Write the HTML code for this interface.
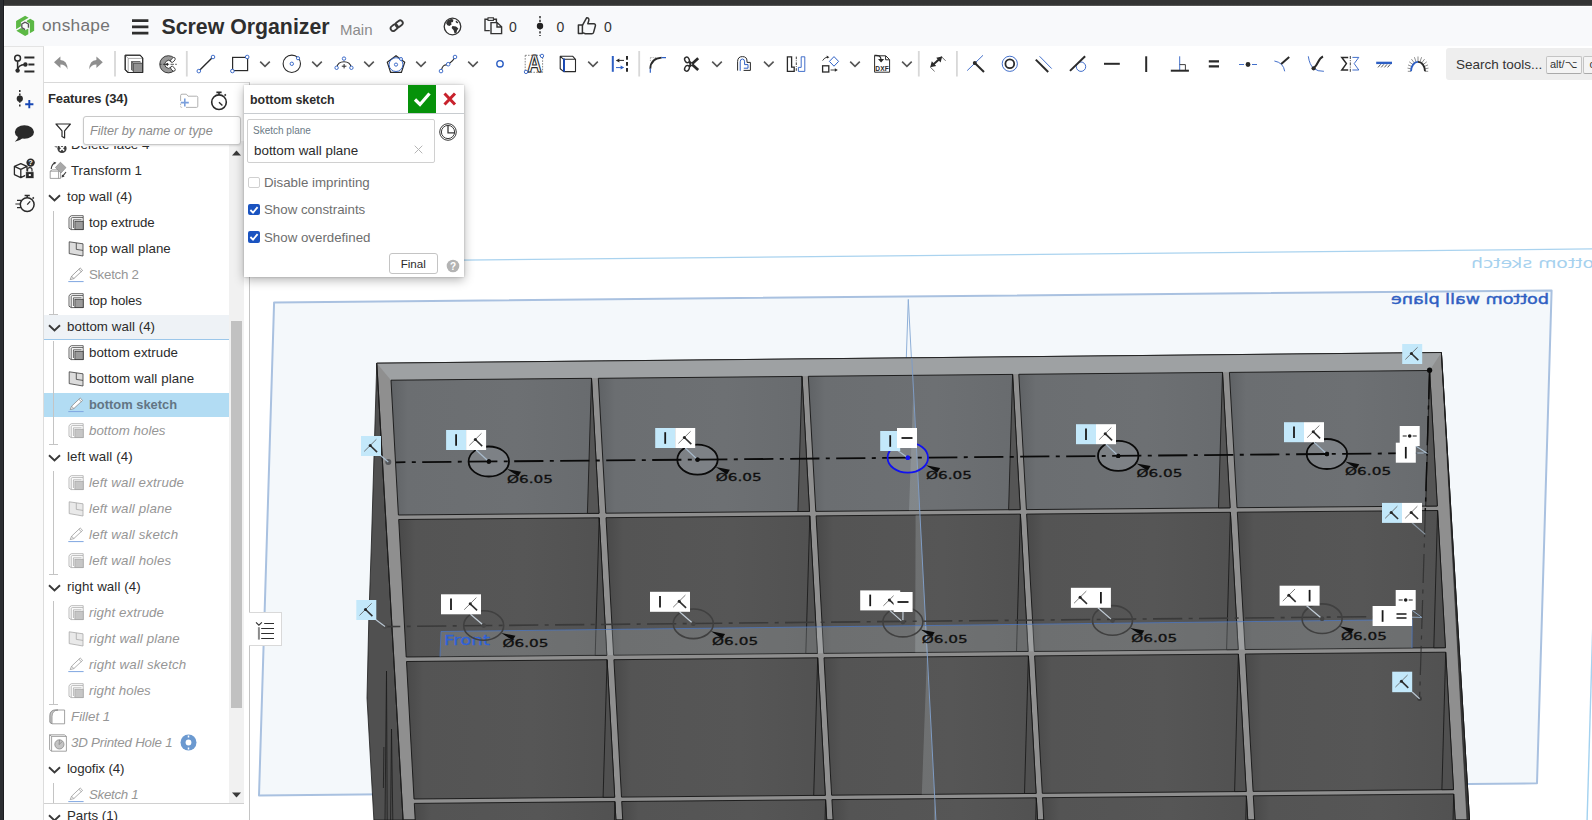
<!DOCTYPE html>
<html lang="en"><head><meta charset="utf-8"><title>Screw Organizer | Onshape</title>
<style>
*{box-sizing:border-box;margin:0;padding:0}
html,body{width:1592px;height:820px;overflow:hidden;background:#fff;font-family:"Liberation Sans",sans-serif;color:#2b2b2b}
#scene{position:absolute;left:0;top:0}
.abs{position:absolute}
#lstrip{position:absolute;left:0;top:0;width:4px;height:820px;background:linear-gradient(90deg,#2b2d31 0,#2b2d31 2.6px,#1b1c20 3.4px,#1b1c20 4px)}
#tbar{position:absolute;left:4px;top:0;width:1588px;height:6px;background:linear-gradient(180deg,#343434 0,#343434 4.4px,#4a4a4a 5.4px,#8a8a8a 6px)}
#hdr{position:absolute;left:4px;top:6px;width:1588px;height:40px;background:#f8f9fb;border-left:1px solid #fff;border-top:1px solid #fff}
#hdr .t{position:absolute;white-space:pre;line-height:1}
#tools{position:absolute;left:44px;top:46px;width:1548px;height:37px;background:#fff}
#side{position:absolute;left:4px;top:46px;width:40px;height:774px;background:#fafafa;border-right:1px solid #dcdcdc;border-top:1px solid #e4e4e4}
.sep{position:absolute;top:6px;width:2px;height:25px;background:#d4d4d4}
.ic{position:absolute;overflow:visible}
#fpanel{position:absolute;left:44px;top:82px;width:206px;height:738px;background:#fff;border-top:1px solid #d9d9d9;border-right:1px solid #c4c4c4}
#fpanel .hd{position:absolute;left:4px;top:8px;font-weight:bold;font-size:13px;letter-spacing:-0.1px;color:#2b2b2b;white-space:pre}
#filter{position:absolute;left:39px;top:32.5px;width:158px;height:29.5px;border:1px solid #c9c9c9;border-radius:3px;background:#fff;box-shadow:0 1px 2px rgba(0,0,0,.12);z-index:3}
#filter span{position:absolute;left:6px;top:7px;font-style:italic;font-size:12.7px;color:#8c8c8c;white-space:pre}
#list{position:absolute;left:0;top:62.5px;width:200px;height:657.5px;overflow:hidden}
.row{position:absolute;left:0;width:185.5px;height:26px;font-size:13.3px;line-height:25px;white-space:pre;color:#2b2b2b}
.row.sup{font-style:italic;color:#969696;font-size:13.3px}
.row.sel{background:#b2dcf3;font-weight:bold;color:#627584;font-size:12.9px}
.row.sel::before{content:'';position:absolute;left:0;top:0;width:100%;height:1.2px;background:#fff}
.row.sel::after{content:'';position:absolute;left:0;bottom:0;width:100%;height:1.2px;background:#fff}
.row.grp{}
.row.grpsel{background:linear-gradient(180deg,#fff 0,#fff 1.5px,#eef2f6 1.5px);border-bottom:1px solid #9cc7ea;height:25.5px}
.row .tx{position:absolute;top:0}
.row svg{position:absolute}
.vline{position:absolute;width:1px;background:#c4c4c4}
.vtick{position:absolute;height:1px;width:9px;background:#c4c4c4}
#sbar{position:absolute;left:185px;top:58px;width:15px;height:663px;background:#f1f1f1}
#sthumb{position:absolute;left:2px;top:180px;width:11px;height:387px;background:#c1c1c1}
#dlg{position:absolute;left:244px;top:85px;width:220px;height:192px;background:#fff;box-shadow:0 3px 10px rgba(0,0,0,.3),0 0 2px rgba(0,0,0,.22);z-index:5}
#dlg .hd{position:absolute;left:0;top:0;width:220px;height:28.5px;border-bottom:1px solid #c8ccd0}
#dlg .hd span{position:absolute;left:6px;top:7.7px;font-weight:bold;font-size:12.4px;color:#2b2b2b;white-space:pre}
#ok{position:absolute;left:164px;top:0;width:28px;height:28px;background:#06920a}
#fld{position:absolute;left:2.5px;top:34px;width:188.5px;height:43.5px;border:1px solid #d0d0d0;border-radius:2px}
#fld .l{position:absolute;left:5.5px;top:5.2px;font-size:10px;color:#6b7a86;white-space:pre}
#fld .v{position:absolute;left:6.5px;top:22.5px;font-size:13.4px;color:#2b2b2b;white-space:pre}
.cb{position:absolute;left:4px;width:11.5px;height:11.5px;border-radius:2px}
.cb svg{position:absolute;left:0;top:0}
.cb.off{border:1px solid #d0d0d0;background:#fff}
.cb.on{background:#1a53c0}
.cbl{position:absolute;left:20px;font-size:13.3px;color:#6e6e6e;white-space:pre}
#final{position:absolute;left:145px;top:168px;width:48.5px;height:21px;border:1px solid #c4c4c4;border-radius:3px;font-size:11.6px;text-align:center;line-height:19px;color:#2b2b2b;background:#fff}
#search{position:absolute;left:1402px;top:2px;width:160px;height:32px;background:#eeeeee;border-radius:3px 0 0 3px;overflow:hidden}
#search span.s{position:absolute;left:10px;top:8.5px;font-size:13.5px;color:#333;white-space:pre}
.kbd{position:absolute;top:8.4px;height:18px;border:1px solid #c4c4c4;border-bottom:1.5px solid #aaa;border-radius:2px;background:#f4f4f4;font-family:"Liberation Sans","DejaVu Sans",sans-serif;font-size:11px;line-height:15px;color:#333;padding-left:3px;white-space:pre}
#flyout{position:absolute;left:249px;top:612px;width:33px;height:34px;background:#fff;border:1px solid #d9d9d9;border-left:none;z-index:2}
#parts{position:absolute;left:0;top:720px;width:200px;height:20px;border-top:1px solid #d0d0d0;background:#fff}
.row.gray{color:#969696}

</style></head>
<body>
<svg id="scene" width="1592" height="820" viewBox="0 0 1592 820">
<defs>
<linearGradient id="gTop" x1="0" y1="0" x2="0" y2="1"><stop offset="0" stop-color="#a1a3a5"/><stop offset="1" stop-color="#909294"/></linearGradient>
<linearGradient id="gF1" x1="0" y1="0" x2="1" y2="0"><stop offset="0" stop-color="#5f6265"/><stop offset="0.08" stop-color="#6b6e71"/><stop offset="0.6" stop-color="#6d7073"/><stop offset="1" stop-color="#686b6e"/></linearGradient>
<linearGradient id="gF2" x1="0" y1="0" x2="1" y2="0"><stop offset="0" stop-color="#494949"/><stop offset="0.08" stop-color="#545454"/><stop offset="0.6" stop-color="#565656"/><stop offset="1" stop-color="#515151"/></linearGradient>
</defs>
<rect width="1592" height="820" fill="#fff"/>
<line x1="250" y1="262.3" x2="1592" y2="248.9" stroke="#aad3ef" stroke-width="1.3"/>
<g transform="translate(1606,268) scale(-1,1)"><text x="0" y="0" font-family="'DejaVu Sans','Liberation Sans',sans-serif" font-size="14" fill="#a6d1ee" textLength="135" lengthAdjust="spacingAndGlyphs">bottom sketch</text></g>
<line x1="1596" y1="515" x2="1587.1" y2="820" stroke="#a3d2f0" stroke-width="1.4"/>
<polygon points="274.1,302.4 1551.6,290.5 1537.0,783.3 259.0,795.5" fill="#f4f8fb" stroke="#a9c1e0" stroke-width="2" stroke-linejoin="round"/>
<g transform="translate(1549,304.3) scale(-1,1)"><text x="0" y="0" font-family="'DejaVu Sans','Liberation Sans',sans-serif" font-size="14" fill="#2f5fc2" textLength="158" lengthAdjust="spacingAndGlyphs" stroke="#2f5fc2" stroke-width="0.45">bottom wall plane</text></g>
<path d="M908.3 299.4 L906.3 358 M908.3 299.4 L911.5 360" stroke="#8fb0d8" stroke-width="1" fill="none"/>
<polygon points="376.8,363.2 371.5,540.0 368.8,620.0 367.0,698.0 373.9,820.0 403.1,820.0" fill="#505050" stroke="#1c1c1c" stroke-width="0.8"/>
<path d="M386.5 671 L385 820 M386.5 671 L387.2 820 M391.5 729 L390.6 820 M391.5 729 L392.8 820 M383.9 747 L383.4 788" stroke="#1c1c1c" stroke-width="0.8" fill="none"/>
<polygon points="376.8,363.2 1441.4,352.5 1469.5,820.0 403.1,820.0" fill="#8f8f8f" stroke="#1c1c1c" stroke-width="0.9" stroke-linejoin="round"/>
<polygon points="1441.4,352.5 1469.5,820.0 1467.0,820.0" fill="#3a3a3a" stroke="#1c1c1c" stroke-width="0.6"/>
<polygon points="376.8,363.2 1441.4,352.5 1429.6,370.5 391.0,380.2" fill="#9ea1a3"/>
<polygon points="391.0,380.2 1429.6,370.5 1437.3,510.5 398.4,519.5" fill="#8f8f8f"/>
<polygon points="376.8,363.2 1441.4,352.5 1469.5,820.0 403.1,820.0" fill="none" stroke="#1c1c1c" stroke-width="0.9" stroke-linejoin="round"/>
<polygon points="391.0,380.2 591.5,378.3 599.0,513.3 398.4,515.0" fill="url(#gF1)" stroke="#141414" stroke-width="0.9" stroke-linejoin="round"/>
<polygon points="591.5,378.3 599.0,513.3 587.4,513.4" fill="#555555" stroke="#141414" stroke-width="0.8" stroke-linejoin="round"/>
<polygon points="598.3,378.3 802.0,376.4 809.5,511.4 605.8,513.2" fill="url(#gF1)" stroke="#141414" stroke-width="0.9" stroke-linejoin="round"/>
<polygon points="802.0,376.4 809.5,511.4 797.9,511.5" fill="#555555" stroke="#141414" stroke-width="0.8" stroke-linejoin="round"/>
<polygon points="808.3,376.3 1012.6,374.4 1020.2,509.6 815.8,511.4" fill="url(#gF1)" stroke="#141414" stroke-width="0.9" stroke-linejoin="round"/>
<polygon points="1012.6,374.4 1020.2,509.6 1008.6,509.7" fill="#555555" stroke="#141414" stroke-width="0.8" stroke-linejoin="round"/>
<polygon points="1018.8,374.3 1222.5,372.4 1230.1,507.8 1026.4,509.6" fill="url(#gF1)" stroke="#141414" stroke-width="0.9" stroke-linejoin="round"/>
<polygon points="1222.5,372.4 1230.1,507.8 1218.5,507.9" fill="#555555" stroke="#141414" stroke-width="0.8" stroke-linejoin="round"/>
<polygon points="1229.4,372.4 1429.6,370.5 1437.3,506.0 1237.0,507.7" fill="url(#gF1)" stroke="#141414" stroke-width="0.9" stroke-linejoin="round"/>
<polygon points="1429.6,370.5 1437.3,506.0 1425.7,506.1" fill="#555555" stroke="#141414" stroke-width="0.8" stroke-linejoin="round"/>
<polygon points="398.7,519.5 599.2,517.8 606.8,655.2 406.2,657.0" fill="url(#gF2)" stroke="#141414" stroke-width="0.9" stroke-linejoin="round"/>
<polygon points="599.2,517.8 606.8,655.2 595.2,655.3" fill="#505050" stroke="#141414" stroke-width="0.8" stroke-linejoin="round"/>
<polygon points="606.0,517.7 809.8,515.9 817.4,653.3 613.6,655.1" fill="url(#gF2)" stroke="#141414" stroke-width="0.9" stroke-linejoin="round"/>
<polygon points="809.8,515.9 817.4,653.3 805.8,653.4" fill="#505050" stroke="#141414" stroke-width="0.8" stroke-linejoin="round"/>
<polygon points="816.1,515.9 1020.4,514.1 1028.1,651.4 823.7,653.3" fill="url(#gF2)" stroke="#141414" stroke-width="0.9" stroke-linejoin="round"/>
<polygon points="1020.4,514.1 1028.1,651.4 1016.5,651.5" fill="#505050" stroke="#141414" stroke-width="0.8" stroke-linejoin="round"/>
<polygon points="1026.6,514.1 1230.4,512.3 1238.2,649.6 1034.3,651.4" fill="url(#gF2)" stroke="#141414" stroke-width="0.9" stroke-linejoin="round"/>
<polygon points="1230.4,512.3 1238.2,649.6 1226.6,649.7" fill="#505050" stroke="#141414" stroke-width="0.8" stroke-linejoin="round"/>
<polygon points="1237.3,512.2 1437.6,510.5 1445.4,647.7 1245.1,649.5" fill="url(#gF2)" stroke="#141414" stroke-width="0.9" stroke-linejoin="round"/>
<polygon points="1437.6,510.5 1445.4,647.7 1433.8,647.8" fill="#505050" stroke="#141414" stroke-width="0.8" stroke-linejoin="round"/>
<polygon points="406.5,661.5 607.1,659.7 614.7,797.2 414.0,799.0" fill="url(#gF2)" stroke="#141414" stroke-width="0.9" stroke-linejoin="round"/>
<polygon points="607.1,659.7 614.7,797.2 603.1,797.3" fill="#505050" stroke="#141414" stroke-width="0.8" stroke-linejoin="round"/>
<polygon points="613.9,659.7 817.7,657.8 825.3,795.3 621.5,797.1" fill="url(#gF2)" stroke="#141414" stroke-width="0.9" stroke-linejoin="round"/>
<polygon points="817.7,657.8 825.3,795.3 813.7,795.4" fill="#505050" stroke="#141414" stroke-width="0.8" stroke-linejoin="round"/>
<polygon points="824.0,657.8 1028.4,655.9 1036.1,793.4 831.6,795.2" fill="url(#gF2)" stroke="#141414" stroke-width="0.9" stroke-linejoin="round"/>
<polygon points="1028.4,655.9 1036.1,793.4 1024.5,793.5" fill="#505050" stroke="#141414" stroke-width="0.8" stroke-linejoin="round"/>
<polygon points="1034.6,655.9 1238.4,654.1 1246.2,791.5 1042.3,793.3" fill="url(#gF2)" stroke="#141414" stroke-width="0.9" stroke-linejoin="round"/>
<polygon points="1238.4,654.1 1246.2,791.5 1234.6,791.6" fill="#505050" stroke="#141414" stroke-width="0.8" stroke-linejoin="round"/>
<polygon points="1245.3,654.0 1445.7,652.2 1453.5,789.6 1253.1,791.4" fill="url(#gF2)" stroke="#141414" stroke-width="0.9" stroke-linejoin="round"/>
<polygon points="1445.7,652.2 1453.5,789.6 1441.9,789.7" fill="#505050" stroke="#141414" stroke-width="0.8" stroke-linejoin="round"/>
<polygon points="414.3,803.4 614.9,801.6 622.8,943.2 422.1,945.0" fill="url(#gF2)" stroke="#141414" stroke-width="0.9" stroke-linejoin="round"/>
<polygon points="614.9,801.6 622.8,943.2 611.2,943.3" fill="#505050" stroke="#141414" stroke-width="0.8" stroke-linejoin="round"/>
<polygon points="621.7,801.5 825.6,799.7 833.5,941.2 629.6,943.1" fill="url(#gF2)" stroke="#141414" stroke-width="0.9" stroke-linejoin="round"/>
<polygon points="825.6,799.7 833.5,941.2 821.9,941.3" fill="#505050" stroke="#141414" stroke-width="0.8" stroke-linejoin="round"/>
<polygon points="831.9,799.6 1036.3,797.8 1044.3,939.3 839.8,941.2" fill="url(#gF2)" stroke="#141414" stroke-width="0.9" stroke-linejoin="round"/>
<polygon points="1036.3,797.8 1044.3,939.3 1032.7,939.4" fill="#505050" stroke="#141414" stroke-width="0.8" stroke-linejoin="round"/>
<polygon points="1042.5,797.7 1246.4,795.9 1254.4,937.4 1050.5,939.3" fill="url(#gF2)" stroke="#141414" stroke-width="0.9" stroke-linejoin="round"/>
<polygon points="1246.4,795.9 1254.4,937.4 1242.8,937.5" fill="#505050" stroke="#141414" stroke-width="0.8" stroke-linejoin="round"/>
<polygon points="1253.3,795.8 1453.7,794.0 1461.8,935.5 1261.4,937.4" fill="url(#gF2)" stroke="#141414" stroke-width="0.9" stroke-linejoin="round"/>
<polygon points="1453.7,794.0 1461.8,935.5 1450.2,935.6" fill="#505050" stroke="#141414" stroke-width="0.8" stroke-linejoin="round"/>
<polygon points="913.2,394.3 919.8,510.5 909.0,510.5" fill="#f0f8ff" opacity="0.17"/>
<polygon points="915.6,515.0 920.0,515.0 927.2,652.4 915.2,652.4" fill="#f0f8ff" opacity="0.17"/>
<polygon points="926.9,656.9 934.5,794.4 921.8,794.4" fill="#f0f8ff" opacity="0.17"/>
<polygon points="934.3,798.8 936.0,822.0 933.8,822.0" fill="#f0f8ff" opacity="0.17"/>
<line x1="911.8" y1="358" x2="935.9" y2="820" stroke="#7f9cc4" stroke-width="1"/>
<clipPath id="cpRow2"><polygon points="398.7,519.5 1437.6,510.5 1445.4,647.7 406.2,657.0"/></clipPath>
<polygon points="441.0,631.5 1412.2,619.6 1412.0,648.0 440.0,656.7" fill="#f0f8ff" opacity="0.17"/>
<polyline points="440.0,656.7 441.0,631.5 1412.2,619.6 1412.0,648.0" fill="none" stroke="#4a78c8" stroke-width="0.9" opacity="0.8"/>
<text x="444" y="644.8" font-family="'DejaVu Sans','Liberation Sans',sans-serif" font-size="13.5" fill="#2f62d8" stroke="#2f62d8" stroke-width="0.3" textLength="46" lengthAdjust="spacingAndGlyphs">Front</text>
<ellipse cx="488.8" cy="461.5" rx="20.2" ry="15" fill="#aab0b8" fill-opacity="0.28"/>
<ellipse cx="697.5" cy="459.6" rx="20.2" ry="15" fill="#aab0b8" fill-opacity="0.28"/>
<ellipse cx="907.8" cy="457.7" rx="20.2" ry="15" fill="#aab0b8" fill-opacity="0.28"/>
<ellipse cx="1118.2" cy="455.9" rx="20.2" ry="15" fill="#aab0b8" fill-opacity="0.28"/>
<ellipse cx="1326.9" cy="454.0" rx="20.2" ry="15" fill="#aab0b8" fill-opacity="0.28"/>
<line x1="396" y1="462.3" x2="1426" y2="453.1" stroke="#0a0a0a" stroke-width="1.8" stroke-dasharray="29.2 6.4 4 6.4" stroke-dashoffset="19.8"/>
<ellipse cx="488.8" cy="461.5" rx="20.2" ry="15" fill="none" stroke="#0a0a0a" stroke-width="1.8"/>
<circle cx="488.8" cy="461.5" r="2.2" fill="#0a0a0a"/>
<polygon points="507.0,469.0 521.2,471.7 518.2,476.3" fill="#0a0a0a"/>
<text x="507.0" y="482.7" font-family="'DejaVu Sans','Liberation Sans',sans-serif" font-size="11.3" fill="#101010" stroke="#101010" stroke-width="0.32" textLength="46" lengthAdjust="spacingAndGlyphs">Ø6.05</text>
<ellipse cx="697.5" cy="459.6" rx="20.2" ry="15" fill="none" stroke="#0a0a0a" stroke-width="1.8"/>
<circle cx="697.5" cy="459.6" r="2.2" fill="#0a0a0a"/>
<polygon points="715.7,467.1 729.9,469.8 726.9,474.4" fill="#0a0a0a"/>
<text x="715.7" y="480.8" font-family="'DejaVu Sans','Liberation Sans',sans-serif" font-size="11.3" fill="#101010" stroke="#101010" stroke-width="0.32" textLength="46" lengthAdjust="spacingAndGlyphs">Ø6.05</text>
<ellipse cx="907.8" cy="457.7" rx="20.2" ry="15" fill="none" stroke="#1212f0" stroke-width="1.8"/>
<circle cx="907.8" cy="457.7" r="2.2" fill="#1212f0"/>
<polygon points="926.0,465.2 940.2,467.9 937.2,472.5" fill="#0a0a0a"/>
<text x="926.0" y="478.9" font-family="'DejaVu Sans','Liberation Sans',sans-serif" font-size="11.3" fill="#101010" stroke="#101010" stroke-width="0.32" textLength="46" lengthAdjust="spacingAndGlyphs">Ø6.05</text>
<ellipse cx="1118.2" cy="455.9" rx="20.2" ry="15" fill="none" stroke="#0a0a0a" stroke-width="1.8"/>
<circle cx="1118.2" cy="455.9" r="2.2" fill="#0a0a0a"/>
<polygon points="1136.4,463.4 1150.6,466.1 1147.6,470.7" fill="#0a0a0a"/>
<text x="1136.4" y="477.1" font-family="'DejaVu Sans','Liberation Sans',sans-serif" font-size="11.3" fill="#101010" stroke="#101010" stroke-width="0.32" textLength="46" lengthAdjust="spacingAndGlyphs">Ø6.05</text>
<ellipse cx="1326.9" cy="454.0" rx="20.2" ry="15" fill="none" stroke="#0a0a0a" stroke-width="1.8"/>
<circle cx="1326.9" cy="454.0" r="2.2" fill="#0a0a0a"/>
<polygon points="1345.1,461.5 1359.3,464.2 1356.3,468.8" fill="#0a0a0a"/>
<text x="1345.1" y="475.2" font-family="'DejaVu Sans','Liberation Sans',sans-serif" font-size="11.3" fill="#101010" stroke="#101010" stroke-width="0.32" textLength="46" lengthAdjust="spacingAndGlyphs">Ø6.05</text>
<line x1="1429.6" y1="370" x2="1419.6" y2="698.7" stroke="#2e2e2e" stroke-width="1.2" stroke-dasharray="29.2 6.4 4 6.4" opacity="0.8"/>
<line x1="1429.6" y1="370" x2="1425.3" y2="511" stroke="#0c0c0c" stroke-width="1.4" stroke-dasharray="29.2 6.4 4 6.4"/>
<circle cx="1429.6" cy="370.2" r="2.6" fill="#0a0a0a"/>
<circle cx="388.3" cy="462" r="3" fill="#55575a"/>
<line x1="385" y1="626.6" x2="1423" y2="616.2" stroke="#3a3a3a" stroke-width="1.6" stroke-dasharray="29.2 6.4 4 6.4" stroke-dashoffset="13.9"/>
<ellipse cx="483.7" cy="625.5" rx="20" ry="14.8" fill="none" stroke="#404040" stroke-width="1.6"/>
<circle cx="483.7" cy="625.5" r="2.1" fill="#444"/>
<polygon points="501.3,633.0 515.5,635.7 512.5,640.3" fill="#0a0a0a"/>
<text x="502.5" y="646.6" font-family="'DejaVu Sans','Liberation Sans',sans-serif" font-size="11.3" fill="#101010" stroke="#101010" stroke-width="0.32" textLength="46" lengthAdjust="spacingAndGlyphs">Ø6.05</text>
<ellipse cx="693.3" cy="623.8" rx="20" ry="14.8" fill="none" stroke="#404040" stroke-width="1.6"/>
<circle cx="693.3" cy="623.8" r="2.1" fill="#444"/>
<polygon points="710.9,631.3 725.1,634.0 722.1,638.6" fill="#0a0a0a"/>
<text x="712.1" y="644.9" font-family="'DejaVu Sans','Liberation Sans',sans-serif" font-size="11.3" fill="#101010" stroke="#101010" stroke-width="0.32" textLength="46" lengthAdjust="spacingAndGlyphs">Ø6.05</text>
<ellipse cx="902.9" cy="622.1" rx="20" ry="14.8" fill="none" stroke="#404040" stroke-width="1.6"/>
<circle cx="902.9" cy="622.1" r="2.1" fill="#444"/>
<polygon points="920.5,629.6 934.7,632.3 931.7,636.9" fill="#0a0a0a"/>
<text x="921.7" y="643.2" font-family="'DejaVu Sans','Liberation Sans',sans-serif" font-size="11.3" fill="#101010" stroke="#101010" stroke-width="0.32" textLength="46" lengthAdjust="spacingAndGlyphs">Ø6.05</text>
<ellipse cx="1112.5" cy="620.4" rx="20" ry="14.8" fill="none" stroke="#404040" stroke-width="1.6"/>
<circle cx="1112.5" cy="620.4" r="2.1" fill="#444"/>
<polygon points="1130.1,627.9 1144.3,630.6 1141.3,635.2" fill="#0a0a0a"/>
<text x="1131.3" y="641.5" font-family="'DejaVu Sans','Liberation Sans',sans-serif" font-size="11.3" fill="#101010" stroke="#101010" stroke-width="0.32" textLength="46" lengthAdjust="spacingAndGlyphs">Ø6.05</text>
<ellipse cx="1322.1" cy="618.7" rx="20" ry="14.8" fill="none" stroke="#404040" stroke-width="1.6"/>
<circle cx="1322.1" cy="618.7" r="2.1" fill="#444"/>
<polygon points="1339.7,626.2 1353.9,628.9 1350.9,633.5" fill="#0a0a0a"/>
<text x="1340.9" y="639.8" font-family="'DejaVu Sans','Liberation Sans',sans-serif" font-size="11.3" fill="#101010" stroke="#101010" stroke-width="0.32" textLength="46" lengthAdjust="spacingAndGlyphs">Ø6.05</text>
<circle cx="385" cy="626.5" r="2.4" fill="#484848"/>
<circle cx="1419.6" cy="698.7" r="2.4" fill="#3a3a3a"/>
<line x1="476.1" y1="450.0" x2="488.8" y2="461.5" stroke="#a9bccd" stroke-width="1.2"/>
<rect x="446.1" y="430.0" width="20" height="20" fill="#c3e8fa"/>
<path d="M456.1 434.2 V445.8" stroke="#1a1a1a" stroke-width="1.8" fill="none"/>
<rect x="466.1" y="430.0" width="20" height="20" fill="#ffffff"/>
<g transform="translate(466.1,430.0)"><path d="M3.2 15.4 L15.4 3.3" stroke="#5a5a5a" stroke-width="0.8" fill="none"/><path d="M9.2 9.5 L16.1 16.1" stroke="#303030" stroke-width="1.6" fill="none"/><circle cx="9.2" cy="9.5" r="1.5" fill="#262626"/></g>
<line x1="685.2" y1="448.0" x2="697.5" y2="459.6" stroke="#a9bccd" stroke-width="1.2"/>
<rect x="655.2" y="428.0" width="20" height="20" fill="#c3e8fa"/>
<path d="M665.2 432.2 V443.8" stroke="#1a1a1a" stroke-width="1.8" fill="none"/>
<rect x="675.2" y="428.0" width="20" height="20" fill="#ffffff"/>
<g transform="translate(675.2,428.0)"><path d="M3.2 15.4 L15.4 3.3" stroke="#5a5a5a" stroke-width="0.8" fill="none"/><path d="M9.2 9.5 L16.1 16.1" stroke="#303030" stroke-width="1.6" fill="none"/><circle cx="9.2" cy="9.5" r="1.5" fill="#262626"/></g>
<line x1="1106.0" y1="444.2" x2="1118.2" y2="455.9" stroke="#a9bccd" stroke-width="1.2"/>
<rect x="1076.0" y="424.2" width="20" height="20" fill="#c3e8fa"/>
<path d="M1086.0 428.4 V440.0" stroke="#1a1a1a" stroke-width="1.8" fill="none"/>
<rect x="1096.0" y="424.2" width="20" height="20" fill="#ffffff"/>
<g transform="translate(1096.0,424.2)"><path d="M3.2 15.4 L15.4 3.3" stroke="#5a5a5a" stroke-width="0.8" fill="none"/><path d="M9.2 9.5 L16.1 16.1" stroke="#303030" stroke-width="1.6" fill="none"/><circle cx="9.2" cy="9.5" r="1.5" fill="#262626"/></g>
<line x1="1314.0" y1="442.2" x2="1326.9" y2="454.0" stroke="#a9bccd" stroke-width="1.2"/>
<rect x="1284.0" y="422.2" width="20" height="20" fill="#c3e8fa"/>
<path d="M1294.0 426.4 V438.0" stroke="#1a1a1a" stroke-width="1.8" fill="none"/>
<rect x="1304.0" y="422.2" width="20" height="20" fill="#ffffff"/>
<g transform="translate(1304.0,422.2)"><path d="M3.2 15.4 L15.4 3.3" stroke="#5a5a5a" stroke-width="0.8" fill="none"/><path d="M9.2 9.5 L16.1 16.1" stroke="#303030" stroke-width="1.6" fill="none"/><circle cx="9.2" cy="9.5" r="1.5" fill="#262626"/></g>
<line x1="897.0" y1="450.0" x2="907.8" y2="457.7" stroke="#a9bccd" stroke-width="1.2"/>
<rect x="880.2" y="431.0" width="20" height="20" fill="#c3e8fa"/>
<path d="M890.2 435.2 V446.8" stroke="#1a1a1a" stroke-width="1.8" fill="none"/>
<rect x="897.0" y="428.0" width="20" height="20" fill="#ffffff"/>
<path d="M901.5 438.0 H912.5" stroke="#1a1a1a" stroke-width="1.8" fill="none"/>
<line x1="380.0" y1="455.0" x2="388.3" y2="462.0" stroke="#a9bccd" stroke-width="1.2"/>
<rect x="361.0" y="436.0" width="20" height="20" fill="#c3e8fa"/>
<g transform="translate(361.0,436.0)"><path d="M3.2 15.4 L15.4 3.3" stroke="#5a5a5a" stroke-width="0.8" fill="none"/><path d="M9.2 9.5 L16.1 16.1" stroke="#303030" stroke-width="1.6" fill="none"/><circle cx="9.2" cy="9.5" r="1.5" fill="#262626"/></g>
<rect x="1402.2" y="344.0" width="20" height="20" fill="#c3e8fa"/>
<g transform="translate(1402.2,344.0)"><path d="M3.2 15.4 L15.4 3.3" stroke="#5a5a5a" stroke-width="0.8" fill="none"/><path d="M9.2 9.5 L16.1 16.1" stroke="#303030" stroke-width="1.6" fill="none"/><circle cx="9.2" cy="9.5" r="1.5" fill="#262626"/></g>
<path d="M1415.8 446 L1426.6 453 L1415.8 453" stroke="#a9bccd" stroke-width="1.1" fill="none"/>
<rect x="1399.7" y="426.0" width="20" height="20" fill="#ffffff"/>
<path d="M1402.7 436.0 H1406.7 M1412.7 436.0 H1416.7" stroke="#1a1a1a" stroke-width="1.1" fill="none"/><circle cx="1409.7" cy="436.0" r="1.8" fill="#1a1a1a"/>
<rect x="1395.8" y="442.7" width="20" height="20" fill="#ffffff"/>
<path d="M1405.8 446.9 V458.5" stroke="#1a1a1a" stroke-width="1.8" fill="none"/>
<line x1="1412.0" y1="522.8" x2="1425.3" y2="534.4" stroke="#8b97a3" stroke-width="1.2"/>
<rect x="1382.0" y="502.9" width="20" height="20" fill="#c3e8fa"/>
<g transform="translate(1382.0,502.9)"><path d="M3.2 15.4 L15.4 3.3" stroke="#5a5a5a" stroke-width="0.8" fill="none"/><path d="M9.2 9.5 L16.1 16.1" stroke="#303030" stroke-width="1.6" fill="none"/><circle cx="9.2" cy="9.5" r="1.5" fill="#262626"/></g>
<rect x="1402.0" y="502.9" width="20" height="20" fill="#ffffff"/>
<g transform="translate(1402.0,502.9)"><path d="M3.2 15.4 L15.4 3.3" stroke="#5a5a5a" stroke-width="0.8" fill="none"/><path d="M9.2 9.5 L16.1 16.1" stroke="#303030" stroke-width="1.6" fill="none"/><circle cx="9.2" cy="9.5" r="1.5" fill="#262626"/></g>
<line x1="375.9" y1="619.7" x2="385.0" y2="626.5" stroke="#b9c6d2" stroke-width="1.2"/>
<rect x="356.3" y="600.0" width="20" height="20" fill="#c3e8fa"/>
<g transform="translate(356.3,600.0)"><path d="M3.2 15.4 L15.4 3.3" stroke="#5a5a5a" stroke-width="0.8" fill="none"/><path d="M9.2 9.5 L16.1 16.1" stroke="#303030" stroke-width="1.6" fill="none"/><circle cx="9.2" cy="9.5" r="1.5" fill="#262626"/></g>
<line x1="470.5" y1="614.3" x2="483.7" y2="625.5" stroke="#c3ced8" stroke-width="1.2"/>
<rect x="441.0" y="594.3" width="40" height="20" fill="#ffffff"/>
<path d="M451.0 598.5 V610.1" stroke="#1a1a1a" stroke-width="1.8" fill="none"/>
<g transform="translate(461.0,594.3)"><path d="M3.2 15.4 L15.4 3.3" stroke="#5a5a5a" stroke-width="0.8" fill="none"/><path d="M9.2 9.5 L16.1 16.1" stroke="#303030" stroke-width="1.6" fill="none"/><circle cx="9.2" cy="9.5" r="1.5" fill="#262626"/></g>
<line x1="679.5" y1="611.8" x2="693.3" y2="623.8" stroke="#c3ced8" stroke-width="1.2"/>
<rect x="650.0" y="591.8" width="40" height="20" fill="#ffffff"/>
<path d="M660.0 596.0 V607.6" stroke="#1a1a1a" stroke-width="1.8" fill="none"/>
<g transform="translate(670.0,591.8)"><path d="M3.2 15.4 L15.4 3.3" stroke="#5a5a5a" stroke-width="0.8" fill="none"/><path d="M9.2 9.5 L16.1 16.1" stroke="#303030" stroke-width="1.6" fill="none"/><circle cx="9.2" cy="9.5" r="1.5" fill="#262626"/></g>
<line x1="889.7" y1="610.4" x2="902.9" y2="622.1" stroke="#c3ced8" stroke-width="1.2"/>
<rect x="860.2" y="590.4" width="40" height="20" fill="#ffffff"/>
<path d="M870.2 594.6 V606.2" stroke="#1a1a1a" stroke-width="1.8" fill="none"/>
<g transform="translate(880.2,590.4)"><path d="M3.2 15.4 L15.4 3.3" stroke="#5a5a5a" stroke-width="0.8" fill="none"/><path d="M9.2 9.5 L16.1 16.1" stroke="#303030" stroke-width="1.6" fill="none"/><circle cx="9.2" cy="9.5" r="1.5" fill="#262626"/></g>
<line x1="1097.9" y1="607.8" x2="1112.5" y2="620.4" stroke="#c3ced8" stroke-width="1.2"/>
<rect x="1070.9" y="587.8" width="40" height="20" fill="#ffffff"/>
<g transform="translate(1070.9,587.8)"><path d="M3.2 15.4 L15.4 3.3" stroke="#5a5a5a" stroke-width="0.8" fill="none"/><path d="M9.2 9.5 L16.1 16.1" stroke="#303030" stroke-width="1.6" fill="none"/><circle cx="9.2" cy="9.5" r="1.5" fill="#262626"/></g>
<path d="M1100.9 592.0 V603.6" stroke="#1a1a1a" stroke-width="1.8" fill="none"/>
<line x1="1306.6" y1="605.7" x2="1322.1" y2="618.7" stroke="#c3ced8" stroke-width="1.2"/>
<rect x="1279.6" y="585.7" width="40" height="20" fill="#ffffff"/>
<g transform="translate(1279.6,585.7)"><path d="M3.2 15.4 L15.4 3.3" stroke="#5a5a5a" stroke-width="0.8" fill="none"/><path d="M9.2 9.5 L16.1 16.1" stroke="#303030" stroke-width="1.6" fill="none"/><circle cx="9.2" cy="9.5" r="1.5" fill="#262626"/></g>
<path d="M1309.6 589.9 V601.5" stroke="#1a1a1a" stroke-width="1.8" fill="none"/>
<line x1="903.0" y1="611.0" x2="902.9" y2="622.1" stroke="#c3ced8" stroke-width="1.2"/>
<rect x="893.6" y="592.0" width="19" height="20" fill="#ffffff"/>
<path d="M897.5 602.0 H908.5" stroke="#1a1a1a" stroke-width="1.8" fill="none"/>
<path d="M1411.7 610 L1421.8 617.4 L1411.7 617.2" stroke="#8ea6c0" stroke-width="1" fill="none"/>
<rect x="1395.7" y="590.0" width="20" height="20" fill="#ffffff"/>
<path d="M1398.7 600.0 H1402.7 M1408.7 600.0 H1412.7" stroke="#1a1a1a" stroke-width="1.1" fill="none"/><circle cx="1405.7" cy="600.0" r="1.8" fill="#1a1a1a"/>
<rect x="1372.6" y="606.0" width="39.5" height="20" fill="#ffffff"/>
<path d="M1382.6 610.2 V621.8" stroke="#1a1a1a" stroke-width="1.8" fill="none"/>
<path d="M1396.5 614.0 H1406.5 M1396.5 618.0 H1406.5" stroke="#1a1a1a" stroke-width="1.6" fill="none"/>
<line x1="1412.2" y1="692.0" x2="1419.6" y2="698.7" stroke="#b9c6d2" stroke-width="1.2"/>
<rect x="1392.2" y="671.7" width="20" height="20.5" fill="#c3e8fa"/>
<g transform="translate(1392.2,671.7)"><path d="M3.2 15.4 L15.4 3.3" stroke="#5a5a5a" stroke-width="0.8" fill="none"/><path d="M9.2 9.5 L16.1 16.1" stroke="#303030" stroke-width="1.6" fill="none"/><circle cx="9.2" cy="9.5" r="1.5" fill="#262626"/></g>
<circle cx="483.7" cy="625.5" r="2.2" fill="#454545"/>
<circle cx="693.3" cy="623.8" r="2.2" fill="#454545"/>
<circle cx="902.9" cy="622.1" r="2.2" fill="#454545"/>
<circle cx="1112.5" cy="620.4" r="2.2" fill="#454545"/>
<circle cx="1322.1" cy="618.7" r="2.2" fill="#454545"/>
<circle cx="488.8" cy="461.5" r="2.2" fill="#0a0a0a"/>
<circle cx="697.5" cy="459.6" r="2.2" fill="#0a0a0a"/>
<circle cx="907.8" cy="457.7" r="2.2" fill="#1212f0"/>
<circle cx="1118.2" cy="455.9" r="2.2" fill="#0a0a0a"/>
<circle cx="1326.9" cy="454.0" r="2.2" fill="#0a0a0a"/>
</svg>
<div id="lstrip"></div><div id="tbar"></div>
<div id="hdr">
<svg class="ic" style="left:10.4px;top:7.8px" width="20.6" height="22" viewBox="0 0 23 24">
<g fill="#5cb845"><path d="M11.3 0.6 L15.2 2.9 L6.6 7.9 L6.6 12.4 L1.2 15.6 L1.2 6.5 Z"/><path d="M17 4 L21.4 6.5 L21.4 17.3 L16.6 20.1 L16.6 9.2 L13.2 7.2 L13.2 6.2 Z"/><path d="M1.5 17.3 L6.8 14.2 L11.3 16.8 L14.9 14.7 L14.9 21.1 L11.3 23.2 Z"/></g>
<path d="M11.3 7.6 L15 9.8 L15 14 M7.6 13.9 L7.6 9.8 L11.3 7.6 M7.6 13.9 L11.3 16" fill="none" stroke="#555" stroke-width="1.5"/></svg>
<span class="t" style="left:37px;top:9.5px;font-size:17.3px;color:#747474;letter-spacing:0.25px">onshape</span>
<svg class="ic" style="left:127px;top:11.5px" width="17" height="16"><path d="M0 1.6 H16.4 M0 7.9 H16.4 M0 14.2 H16.4" stroke="#2e2e2e" stroke-width="2.7" fill="none"/></svg>
<span class="t" style="left:156.5px;top:10.3px;font-size:21.3px;font-weight:bold;color:#2e2e2e;letter-spacing:0px">Screw Organizer</span>
<span class="t" style="left:335px;top:14.5px;font-size:15px;color:#8b8b8b">Main</span>
<svg class="ic" style="left:384.3px;top:11px" width="15.4" height="15.4" viewBox="0 0 18 18"><g transform="rotate(-38 9 9)" fill="none" stroke="#3a3a3a" stroke-width="2.1"><rect x="0.8" y="6" width="9" height="6" rx="3"/><rect x="8.2" y="6" width="9" height="6" rx="3"/></g></svg>
<svg class="ic" style="left:437.5px;top:9.5px" width="19" height="19" viewBox="0 0 19 19"><circle cx="9.5" cy="9.5" r="8.3" fill="#fff" stroke="#333" stroke-width="1.3"/><path d="M5 3 Q8 1.6 10.4 2.4 L10 5 L8 5.6 L8.6 7.4 L6.4 9 L4.4 8.2 L3 6 Z" fill="#333"/><path d="M9.4 9 L13 9.4 L15.4 11.6 L14 13.6 L13.4 16.2 L11.6 16.6 L10.6 13.2 L8.6 11 Z" fill="#333"/><path d="M13 3.4 L15.4 5.6 L14.2 6.6 L12.6 5Z" fill="#333"/></svg>
<svg class="ic" style="left:479px;top:10px" width="19" height="18" viewBox="0 0 19 18"><path d="M5.8 13.6 H1 V2.2 H12.4 V5" fill="none" stroke="#333" stroke-width="1.4"/><rect x="4" y="0.8" width="5.4" height="2.6" fill="#f8f9fb" stroke="#333" stroke-width="1.1"/><path d="M7 5.6 H13.2 L17.6 9.8 V16.6 H7 Z M13 5.8 V10 H17.4" fill="none" stroke="#333" stroke-width="1.4"/></svg>
<span class="t" style="left:504px;top:13px;font-size:14px;color:#333">0</span>
<svg class="ic" style="left:531px;top:8px" width="8" height="22"><path d="M4 1 V21" stroke="#222" stroke-width="1.4" stroke-dasharray="2.2 1.6" fill="none"/><circle cx="4" cy="11" r="3.2" fill="#222"/></svg>
<span class="t" style="left:551.5px;top:13px;font-size:14px;color:#333">0</span>
<svg class="ic" style="left:572px;top:9px" width="20" height="20" viewBox="0 0 20 20"><path d="M1.4 9 H5.4 V17.6 H1.4 Z" fill="none" stroke="#333" stroke-width="1.5" stroke-linejoin="round"/><path d="M5.4 9.4 L9.6 1.8 Q12.4 1.6 11.8 4.6 L10.8 7.8 H16.8 Q18.8 8 18.4 9.8 L16.6 16.4 Q16.2 17.8 14.8 17.8 H8.4 L5.4 16.6" fill="none" stroke="#333" stroke-width="1.5" stroke-linejoin="round"/></svg>
<span class="t" style="left:599px;top:13px;font-size:14px;color:#333">0</span>

</div>
<div id="tools">
<svg class="ic" style="left:0;top:0" width="1548" height="37" viewBox="44 46 1548 37">
<path d="M54 62.2 L60.4 56.4 V60 Q67.4 60.4 67.6 69.6 Q65.6 64.6 60.4 64.6 V68 Z" fill="#8f8f8f"/>
<path d="M102.8 62.2 L96.4 56.4 V60 Q89.4 60.4 89.2 69.6 Q91.2 64.6 96.4 64.6 V68 Z" fill="#8f8f8f"/>
<rect x="114.1" y="51" width="1.8" height="25.5" fill="#d8d8d8"/>
<path d="M125.2 55.2 H140.1 L142.7 58 V72.5 H128 L125.2 69.7 Z" fill="#fff" stroke="#2a2a2a" stroke-width="1.1" stroke-linejoin="round"/><path d="M125.4 55.4 L128.2 58.4 H142.5 M128.2 58.4 V72.3" fill="none" stroke="#8a8a8a" stroke-width="0.7"/><path d="M131.5 61.5 H140.2 L142.2 63.5 V72 H133.5 L131.5 70 Z" fill="#919191"/><path d="M131.5 61.5 L133.5 63.5 V72 L131.5 70Z" fill="#7d7d7d"/><path d="M131.5 61.5 H140.2 L142.2 63.5 H133.5Z" fill="#9d9d9d"/><path d="M131.5 70 V61.5 H140.2 M131.5 61.5 L133.5 63.5 H142.2 M133.5 63.5 V72" fill="none" stroke="#4a4a4a" stroke-width="0.7"/><path d="M125.2 55.2 H140.1 L142.7 58 V72.5 H128 L125.2 69.7 Z" fill="none" stroke="#2a2a2a" stroke-width="0.9" stroke-linejoin="round"/>
<path d="M174.6 58.4 A8.6 8.6 0 1 0 174.6 70.2 L171.2 67.2 A3.9 3.9 0 1 1 171.2 61.4 Z" fill="#999" stroke="#2a2a2a" stroke-width="0.9" stroke-linejoin="round"/><ellipse cx="172.9" cy="59.9" rx="2.9" ry="1.7" transform="rotate(-48 172.9 59.9)" fill="#fff" stroke="#2a2a2a" stroke-width="0.8"/><ellipse cx="172.9" cy="68.7" rx="2.9" ry="1.7" transform="rotate(48 172.9 68.7)" fill="#fff" stroke="#2a2a2a" stroke-width="0.8"/><path d="M160 64.3 H177.2" stroke="#2a2a2a" stroke-width="0.8" stroke-dasharray="1.6 1.3 3.4 1.3"/><path d="M164.8 64.3 L168 62.7 V65.9 Z" fill="#2a2a2a"/>
<rect x="185.9" y="51" width="1.8" height="25.5" fill="#d8d8d8"/>
<path d="M199.6 70.3 L212.2 57.8" stroke="#2a2a2a" stroke-width="1.4"/>
<circle cx="198.8" cy="71.1" r="1.8" fill="#fff" stroke="#2d5fc4" stroke-width="0.9"/>
<circle cx="213.0" cy="57.0" r="1.8" fill="#fff" stroke="#2d5fc4" stroke-width="0.9"/>
<rect x="232.6" y="57.4" width="15" height="13.2" fill="none" stroke="#2a2a2a" stroke-width="1.2"/>
<circle cx="232.4" cy="71.0" r="1.8" fill="#fff" stroke="#2d5fc4" stroke-width="0.9"/>
<circle cx="247.2" cy="57.0" r="1.8" fill="#fff" stroke="#2d5fc4" stroke-width="0.9"/>
<path d="M260.2 61.6 L265.0 66.3 L269.8 61.6" fill="none" stroke="#555" stroke-width="1.6"/>
<circle cx="291.8" cy="63.8" r="8.7" fill="none" stroke="#2a2a2a" stroke-width="1.1"/>
<circle cx="291.8" cy="63.8" r="1.7" fill="#fff" stroke="#2d5fc4" stroke-width="0.9"/>
<circle cx="298.0" cy="58.2" r="1.6" fill="#fff" stroke="#2d5fc4" stroke-width="0.9"/>
<path d="M312.2 61.6 L317.0 66.3 L321.8 61.6" fill="none" stroke="#555" stroke-width="1.6"/>
<path d="M336.6 67.6 A7.6 7.6 0 0 1 351.4 67.6" fill="none" stroke="#2a2a2a" stroke-width="1.1"/><path d="M341.8 66.2 H346.4 M344.1 64 V68.4" stroke="#2a2a2a" stroke-width="1"/>
<circle cx="336.6" cy="67.8" r="1.7" fill="#fff" stroke="#2d5fc4" stroke-width="0.9"/>
<circle cx="351.4" cy="67.8" r="1.7" fill="#fff" stroke="#2d5fc4" stroke-width="0.9"/>
<circle cx="344.0" cy="58.6" r="1.7" fill="#fff" stroke="#2d5fc4" stroke-width="0.9"/>
<path d="M364.2 61.6 L369.0 66.3 L373.8 61.6" fill="none" stroke="#555" stroke-width="1.6"/>
<polygon points="396.0,55.8 404.7,62.2 401.4,72.4 390.6,72.4 387.3,62.2" fill="none" stroke="#2a2a2a" stroke-width="1.2"/><circle cx="396" cy="64.6" r="6.9" fill="none" stroke="#2d5fc4" stroke-width="0.9"/>
<circle cx="396.0" cy="64.6" r="1.6" fill="#fff" stroke="#2d5fc4" stroke-width="0.9"/>
<circle cx="401.0" cy="59.0" r="1.5" fill="#fff" stroke="#2d5fc4" stroke-width="0.9"/>
<path d="M416.2 61.6 L421.0 66.3 L425.8 61.6" fill="none" stroke="#555" stroke-width="1.6"/>
<path d="M441.4 70.4 C443 63 446 66 448.4 64 C451 62 452.4 62 454.6 57.8" fill="none" stroke="#2a2a2a" stroke-width="1.1"/>
<circle cx="441.0" cy="71.1" r="1.8" fill="#fff" stroke="#2d5fc4" stroke-width="0.9"/>
<circle cx="448.2" cy="64.2" r="1.8" fill="#fff" stroke="#2d5fc4" stroke-width="0.9"/>
<circle cx="455.0" cy="57.0" r="1.8" fill="#fff" stroke="#2d5fc4" stroke-width="0.9"/>
<path d="M468.2 61.6 L473.0 66.3 L477.8 61.6" fill="none" stroke="#555" stroke-width="1.6"/>
<circle cx="500" cy="63.8" r="3.2" fill="#fff" stroke="#2d5fc4" stroke-width="1.4"/>
<rect x="525.2" y="55.3" width="17.4" height="17" fill="none" stroke="#555" stroke-width="0.7" stroke-dasharray="1.6 1.2"/><text x="527.2" y="72" font-family="'Liberation Sans',sans-serif" font-weight="bold" font-size="23.2" textLength="14.4" lengthAdjust="spacingAndGlyphs" fill="#fff" stroke="#2a2a2a" stroke-width="1.2">A</text>
<circle cx="526.0" cy="71.9" r="1.7" fill="#fff" stroke="#2d5fc4" stroke-width="0.9"/>
<circle cx="542.0" cy="55.9" r="1.7" fill="#fff" stroke="#2d5fc4" stroke-width="0.9"/>
<path d="M563.7 59.3 H575.5 V71.6 H563.7 Z M563.7 59.3 L560.2 56.3 H572.8 L575.5 59.3 M560.2 56.3 V68.8 L563.7 71.6" fill="#fff" stroke="#2a2a2a" stroke-width="1.1" stroke-linejoin="round"/><path d="M564 58.6 V71.8" stroke="#1747b5" stroke-width="1.9"/>
<path d="M588.2 61.6 L593.0 66.3 L597.8 61.6" fill="none" stroke="#555" stroke-width="1.6"/>
<path d="M612.8 56 V71.8" stroke="#2d5fc4" stroke-width="2"/><path d="M627 56 V72" stroke="#2a2a2a" stroke-width="2" stroke-dasharray="3.8 2.2"/><path d="M618 60.4 H624" stroke="#2a2a2a" stroke-width="1"/><path d="M615.8 60.4 L619.4 58.4 V62.4Z" fill="#2a2a2a"/><path d="M616 67.6 H622" stroke="#2d5fc4" stroke-width="1"/><path d="M624.2 67.6 L620.6 65.6 V69.6Z" fill="#2d5fc4"/>
<rect x="638.3" y="51" width="1.8" height="25.5" fill="#d8d8d8"/>
<path d="M650.4 57.6 H656 M650.4 57.6 V62" stroke="#777" stroke-width="0.6" stroke-dasharray="1.2 1"/><path d="M650.3 68.8 Q650.6 58.4 661.6 57.6" fill="none" stroke="#2a2a2a" stroke-width="1.9"/><path d="M650.3 68.6 V72.8 M661.4 57.6 H666" stroke="#2d5fc4" stroke-width="1.2"/>
<g fill="none" stroke="#2a2a2a"><path d="M689.4 66.2 L698.2 58.2" stroke-width="2.7"/><path d="M689.4 62 L698.2 70" stroke-width="2.7"/><ellipse cx="687" cy="59.9" rx="2.2" ry="2.9" transform="rotate(-28 687 59.9)" stroke-width="1.4"/><ellipse cx="687" cy="68.3" rx="2.2" ry="2.9" transform="rotate(28 687 68.3)" stroke-width="1.4"/></g><circle cx="691.6" cy="64.1" r="0.7" fill="#fff"/>
<path d="M712.2 61.6 L717.0 66.3 L721.8 61.6" fill="none" stroke="#555" stroke-width="1.6"/>
<path d="M737.6 70.6 V61.4 Q737.8 56.6 742.4 56.6 Q747 56.6 747 61 V62.4 H750.4 V70.4 H743.6" fill="none" stroke="#2a2a2a" stroke-width="1"/><path d="M740.2 70.8 V61.8 Q740.2 59 742.4 59 Q744.6 59 744.6 61.8 V64.6 H748 V68.2 H743.8" fill="none" stroke="#2d5fc4" stroke-width="1"/>
<path d="M764.0 61.6 L768.8 66.3 L773.6 61.6" fill="none" stroke="#555" stroke-width="1.6"/>
<path d="M787.4 56.8 H791.6 V67.2 H794.2 V71.4 H787.4 Z" fill="#fff" stroke="#2a2a2a" stroke-width="1.3"/><path d="M796.3 56.6 V72" stroke="#2a2a2a" stroke-width="0.9" stroke-dasharray="2.6 1.2 0.8 1.2"/><path d="M804.8 56.8 H801.2 V67.4 H798.4 V71.4 H804.8 Z" fill="#fff" stroke="#2d5fc4" stroke-width="0.9"/>
<rect x="822.6" y="65.8" width="6.2" height="6.2" fill="#fff" stroke="#2a2a2a" stroke-width="1.3"/><path d="M834 56.6 L838.6 61.4 L834 66.2 L829.4 61.4 Z" fill="#fff" stroke="#2d5fc4" stroke-width="1"/><path d="M822.6 60.6 Q824.4 57.4 827.6 57" fill="none" stroke="#2a2a2a" stroke-width="0.9"/><path d="M829.4 57.2 L826.6 55.4 L827 58.6Z" fill="#2a2a2a"/><path d="M830.6 70 H835.6" stroke="#2a2a2a" stroke-width="0.9"/><path d="M837.8 70 L834.8 68.2 V71.8Z" fill="#2a2a2a"/>
<path d="M850.2 61.6 L855.0 66.3 L859.8 61.6" fill="none" stroke="#555" stroke-width="1.6"/>
<path d="M874.6 55.8 H885.8 L889.6 59.6 V72.2 H874.6 Z M885.6 56 V59.8 H889.4" fill="#fff" stroke="#2a2a2a" stroke-width="1" stroke-linejoin="round"/><path d="M874.4 55.4 Q880.8 54.6 881 59.4" fill="none" stroke="#2a2a2a" stroke-width="1.2"/><path d="M878 59 H884.2 L881.1 62.6Z" fill="#2a2a2a"/><text x="882.1" y="70.6" font-family="'Liberation Sans',sans-serif" font-weight="bold" font-size="6.6" text-anchor="middle" fill="#2a2a2a" letter-spacing="0.2">DXF</text>
<path d="M902.1 61.6 L906.9 66.3 L911.7 61.6" fill="none" stroke="#555" stroke-width="1.6"/>
<rect x="917.9" y="51" width="1.8" height="25.5" fill="#d8d8d8"/>
<path d="M933 64.8 L939.4 59" stroke="#2a2a2a" stroke-width="2"/><path d="M930.2 67.2 L931.8 61.2 L936.2 66Z M942.2 56.6 L940.6 62.6 L936.2 57.8Z" fill="#2a2a2a"/><path d="M930.2 67 L934.6 71.4 M941 56.2 L945.6 60.8" stroke="#2a2a2a" stroke-width="0.7"/>
<rect x="956.0" y="51" width="1.8" height="25.5" fill="#d8d8d8"/>
<path d="M967.2 70.6 L983 55.3" stroke="#2d5fc4" stroke-width="0.9"/><path d="M974.8 63 L984 72" stroke="#2a2a2a" stroke-width="2"/><circle cx="974.8" cy="63" r="2" fill="#2a2a2a"/>
<circle cx="1009.8" cy="63.8" r="7.6" fill="none" stroke="#2d5fc4" stroke-width="0.9"/><circle cx="1009.8" cy="63.8" r="4.4" fill="none" stroke="#2a2a2a" stroke-width="1.8"/>
<path d="M1035.8 59.6 L1048.2 72" stroke="#2a2a2a" stroke-width="2"/><path d="M1039.6 56.3 L1051.7 68.6" stroke="#2d5fc4" stroke-width="0.9"/>
<circle cx="1081" cy="66.7" r="4.7" fill="none" stroke="#2d5fc4" stroke-width="0.9"/><path d="M1070 70.9 L1085.1 56.3" stroke="#2a2a2a" stroke-width="2"/>
<path d="M1104 63.8 H1119.8" stroke="#2a2a2a" stroke-width="2"/><path d="M1146.2 56.3 V72" stroke="#2a2a2a" stroke-width="2"/>
<path d="M1179.7 56.3 V70" stroke="#2d5fc4" stroke-width="0.9"/><path d="M1179.7 64.6 H1185.4 V70" fill="none" stroke="#2a2a2a" stroke-width="0.9"/><path d="M1170.8 70.7 H1188.9" stroke="#2a2a2a" stroke-width="2"/>
<path d="M1208.8 61.4 H1219 M1208.8 66.4 H1219" stroke="#2a2a2a" stroke-width="2.1"/>
<path d="M1239 64.5 H1244 M1252 64.5 H1257" stroke="#2d5fc4" stroke-width="0.9"/><circle cx="1248" cy="64.5" r="2.4" fill="#2a2a2a"/>
<path d="M1274.4 61 Q1283.4 62.6 1284.7 71.3" fill="none" stroke="#2d5fc4" stroke-width="0.9"/><path d="M1281.2 64 L1289.2 56.9" stroke="#2a2a2a" stroke-width="2"/>
<path d="M1308.3 56.3 Q1309.6 65 1313.6 68.3 Q1317.6 71.6 1323.9 71.3" fill="none" stroke="#2d5fc4" stroke-width="0.9"/><path d="M1313.6 68.3 C1319 64 1317.6 58.8 1323 56.5" fill="none" stroke="#2a2a2a" stroke-width="2"/><circle cx="1313.6" cy="68.3" r="2.1" fill="#2a2a2a"/>
<path d="M1348.2 57.4 H1341.8 L1346.4 63.6 L1341.8 70 H1348.2" fill="none" stroke="#2a2a2a" stroke-width="1.5"/><path d="M1350.3 56 V72" stroke="#2a2a2a" stroke-width="0.9" stroke-dasharray="3 1.2 1 1.2"/><path d="M1352.4 57.4 H1358.8 L1354.2 63.6 L1358.8 70 H1352.4" fill="none" stroke="#2d5fc4" stroke-width="0.9"/>
<path d="M1376.2 62.9 H1392" stroke="#2d5fc4" stroke-width="2.4"/><path d="M1378 67.4 L1380.6 64.4 M1381.2 67.4 L1383.8 64.4 M1384.4 67.4 L1387 64.4 M1387.6 67.4 L1390.2 64.4" stroke="#2a2a2a" stroke-width="0.8"/>
<path d="M1411.0 71.3 L1407.8 71.3 M1411.2 68.9 L1407.5 68.1 M1411.9 66.6 L1408.0 64.9 M1413.1 64.7 L1409.2 61.8 M1414.5 63.2 L1411.4 59.1 M1416.2 62.2 L1414.4 57.2 M1418.0 61.9 L1418.0 56.5 M1419.8 62.2 L1421.6 57.2 M1421.5 63.2 L1424.6 59.1 M1422.9 64.7 L1426.8 61.8 M1424.1 66.6 L1428.0 64.9 M1424.8 68.9 L1428.5 68.1 M1425.0 71.3 L1428.2 71.3 " stroke="#444" stroke-width="0.6"/><path d="M1411 71.3 A7 9.4 0 0 1 1418 61.9" fill="none" stroke="#2d5fc4" stroke-width="1.9"/><path d="M1418 61.9 A7 9.4 0 0 1 1425 71.3" fill="none" stroke="#2a2a2a" stroke-width="1.9"/>
</svg>
<div id="search"><span class="s">Search tools...</span><span class="kbd" style="left:100px;width:35.5px">alt/⌥</span><span class="kbd" style="left:136.5px;width:30px"> c</span></div>
</div>
<div id="side">
<svg class="ic" style="left:0;top:0" width="40" height="200" viewBox="4 47 40 200">
<g fill="none" stroke="#2a2a2a">
<circle cx="17.6" cy="58.2" r="2.9" stroke-width="1.5"/>
<path d="M17.6 61.2 V70" stroke-width="1.5"/>
<path d="M17.8 69.6 Q18.4 65 24.6 64.6" stroke-width="1.5"/>
<path d="M24.4 57.4 H34.4 M28.4 64.5 H34.4 M24.4 71.6 H34.4" stroke-width="2"/>
</g>
<circle cx="17.6" cy="70.6" r="2.2" fill="#2a2a2a"/><circle cx="25.4" cy="64.5" r="2.2" fill="#2a2a2a"/>
<path d="M19.8 90 V108" stroke="#2a2a2a" stroke-width="1.5" stroke-dasharray="2 1.6"/><circle cx="19.8" cy="98.7" r="3.1" fill="#2a2a2a"/>
<path d="M25.2 104.2 H33.4 M29.3 100.1 V108.3" stroke="#1747b5" stroke-width="1.9"/>
<ellipse cx="24.4" cy="132" rx="9.6" ry="6.7" fill="#2a2a2a"/><path d="M18.4 135.6 Q18 139.4 14.8 141.8 Q20.4 140.8 23.4 137.6Z" fill="#2a2a2a"/>
<g fill="none" stroke="#2a2a2a" stroke-width="1.3" stroke-linejoin="round"><path d="M14.4 166.4 L20.8 163.6 L27 166.4 V174.6 L20.8 177.6 L14.4 174.6 Z M14.4 166.4 L20.8 169.4 L27 166.4 M20.8 169.4 V177.6"/></g>
<rect x="25.6" y="171.6" width="8.4" height="7" rx="0.8" fill="#2a2a2a" stroke="#fafafa" stroke-width="0.8"/><path d="M27.6 171.6 V169.6 Q27.6 167.6 29.8 167.6 Q32 167.6 32 169.6 V171.6" fill="none" stroke="#2a2a2a" stroke-width="1.2"/><rect x="28.8" y="174" width="2" height="2" fill="#fafafa"/>
<circle cx="30.6" cy="162.6" r="4.2" fill="#2a2a2a"/><text x="30.6" y="165.2" font-family="'Liberation Sans',sans-serif" font-size="7.4" font-weight="bold" fill="#fafafa" text-anchor="middle">?</text>
<g fill="none" stroke="#2a2a2a"><circle cx="27.2" cy="204.6" r="6.9" stroke-width="1.5"/><path d="M24.6 195.6 H29.8 M27.2 195.8 V197.6 M32.6 198.6 L33.8 197.4" stroke-width="1.5"/><path d="M27.2 204.6 L30.2 201.4" stroke-width="1.3"/><path d="M17 200.4 H21.4 M15.4 204 H20 M17 207.6 H21.2" stroke-width="1.1"/></g>
</svg>

</div>
<div id="fpanel">
<div class="hd">Features (34)</div>
<svg class="ic" style="left:135px;top:10px" width="20" height="16" viewBox="0 0 20 16"><path d="M1.6 8 V2.6 Q1.6 1.2 3 1.2 H7.4 L9 3.2 H17.6 Q18.8 3.2 18.8 4.4 V13.2 Q18.8 14.4 17.6 14.4 H7" fill="none" stroke="#a8a8a8" stroke-width="0.9"/><path d="M1.6 10.6 V13.6 Q1.6 14.4 2.6 14.4 H4" fill="none" stroke="#a8a8a8" stroke-width="0.9" stroke-dasharray="1.6 1.2"/><path d="M1.8 9.6 H9.8 M5.8 5.6 V13.6" stroke="#7a9fdc" stroke-width="1.6"/></svg>
<svg class="ic" style="left:165px;top:7px" width="20" height="22" viewBox="0 0 20 22"><circle cx="10" cy="12.2" r="7.3" fill="none" stroke="#2a2a2a" stroke-width="1.6"/><path d="M7.4 2.4 H12.6 M10 2.6 V4.8 M15.6 5.6 L16.8 4.4" stroke="#2a2a2a" stroke-width="1.6" fill="none"/><path d="M10 12.2 L13.4 15.4" stroke="#2a2a2a" stroke-width="1.4"/></svg>
<svg class="ic" style="left:10.5px;top:40px" width="17" height="17" viewBox="0 0 17 17"><path d="M1 1 H15.4 L9.6 7.8 V15 L7 13.4 V7.8 Z" fill="none" stroke="#2a2a2a" stroke-width="1.2" stroke-linejoin="round"/></svg>

<div id="filter"><span>Filter by name or type</span></div>
<div id="list">
<div class="row" style="top:-13.5px"><svg style="left:5.5px;top:3.5px" width="19" height="19" viewBox="0 0 19 19"><path d="M3 9 L8 9.6 L6.4 12Z" fill="#8a8a8a"/><circle cx="12" cy="12.4" r="4.6" fill="#3c3c3c"/><path d="M9.8 10.2 L14.2 14.6 M14.2 10.2 L9.8 14.6" stroke="#fff" stroke-width="1.5"/></svg><span class="tx" style="left:27px"><span style="letter-spacing:0.000px">Delete face 4</span></span></div>
<div class="row" style="top:12.5px"><svg style="left:5px;top:3px" width="19" height="19" viewBox="0 0 19 19"><path d="M1.2 10.2 L3.2 8.8 H11.6 V17.4 H1.2 Z M1.2 10.2 H9.6 V17.4 M9.6 10.2 L11.6 8.8" fill="#fff" stroke="#8a8a8a" stroke-width="0.8" stroke-linejoin="round"/><path d="M11.4 1.2 L17 6.6 L12 12 L6.4 6.6 Z" fill="#a8a8a8" stroke="#8a8a8a" stroke-width="0.7"/><path d="M2.2 8 Q2.6 3.4 6 1.8" fill="none" stroke="#3c3c3c" stroke-width="1.1"/><path d="M4.4 0.8 L7.4 1.4 L5.6 3.6Z" fill="#3c3c3c"/><path d="M17 11 L13.6 15.4" fill="none" stroke="#3c3c3c" stroke-width="1.1"/><path d="M12.6 16.6 L13 13.6 L15.6 15.4Z" fill="#3c3c3c"/></svg><span class="tx" style="left:27px"><span style="letter-spacing:-0.017px">Transform 1</span></span></div>
<div class="row" style="top:38.5px"><svg style="left:4px;top:10px" width="13" height="8" viewBox="0 0 13 8"><path d="M1 1.2 L6.5 6.4 L12 1.2" fill="none" stroke="#3a3a3a" stroke-width="1.9"/></svg><span class="tx" style="left:23px"><span style="letter-spacing:0.014px">top wall (4)</span></span></div>
<div class="row" style="top:64.5px"><svg style="left:24px;top:5px" width="16" height="16" viewBox="0 0 16 16"><path d="M2.2 1.9 Q2.2 0.7 3.6 0.7 H15.2 V14.6 H3.2 L1 13.2 V3.4 Q1 2 2.2 1.9 M3.2 14.6 V3.6 Q3.2 2.6 4.4 2.6 H15" fill="#fff" stroke="#3c3c3c" stroke-width="0.8" stroke-linejoin="round"/><rect x="6.9" y="6.3" width="8.3" height="8.3" fill="#9b9b9b" stroke="#3c3c3c" stroke-width="0.8"/><path d="M5.4 13 V4.8 H13.6" fill="none" stroke="#3c3c3c" stroke-width="0.8"/></svg><span class="tx" style="left:45px"><span style="letter-spacing:-0.085px">top extrude</span></span></div>
<div class="row" style="top:90.5px"><svg style="left:24px;top:5px" width="16" height="16" viewBox="0 0 16 16"><path d="M1.2 0.8 L15 2.8 V15 L1.2 12.6 Z" fill="#dcdcdc" stroke="#3c3c3c" stroke-width="0.8" stroke-linejoin="round"/><path d="M8.3 1.9 V8.4 L15 9.4" fill="none" stroke="#3c3c3c" stroke-width="0.8"/></svg><span class="tx" style="left:45px"><span style="letter-spacing:0.034px">top wall plane</span></span></div>
<div class="row gray" style="top:116.5px"><svg style="left:24px;top:5px" width="16" height="16" viewBox="0 0 16 16"><path d="M2.2 12.6 L3.6 9.2 L12.2 1 L14.6 3.4 L5.8 11.6 Z M3.6 9.2 L5.8 11.6 M10.9 2.3 L13.3 4.7" fill="#fff" stroke="#8a8a8a" stroke-width="0.8" stroke-linejoin="round"/><path d="M0.3 14.6 H15.6" stroke="#7fa6e0" stroke-width="1"/></svg><span class="tx" style="left:45px"><span style="letter-spacing:-0.256px">Sketch 2</span></span></div>
<div class="row" style="top:142.5px"><svg style="left:24px;top:5px" width="16" height="16" viewBox="0 0 16 16"><path d="M2.2 1.9 Q2.2 0.7 3.6 0.7 H15.2 V14.6 H3.2 L1 13.2 V3.4 Q1 2 2.2 1.9 M3.2 14.6 V3.6 Q3.2 2.6 4.4 2.6 H15" fill="#fff" stroke="#3c3c3c" stroke-width="0.8" stroke-linejoin="round"/><rect x="6.9" y="6.3" width="8.3" height="8.3" fill="#9b9b9b" stroke="#3c3c3c" stroke-width="0.8"/><path d="M5.4 13 V4.8 H13.6" fill="none" stroke="#3c3c3c" stroke-width="0.8"/></svg><span class="tx" style="left:45px"><span style="letter-spacing:-0.119px">top holes</span></span></div>
<div class="row grpsel" style="top:168.5px"><svg style="left:4px;top:10px" width="13" height="8" viewBox="0 0 13 8"><path d="M1 1.2 L6.5 6.4 L12 1.2" fill="none" stroke="#3a3a3a" stroke-width="1.9"/></svg><span class="tx" style="left:23px"><span style="letter-spacing:0.060px">bottom wall (4)</span></span></div>
<div class="row" style="top:194.5px"><svg style="left:24px;top:5px" width="16" height="16" viewBox="0 0 16 16"><path d="M2.2 1.9 Q2.2 0.7 3.6 0.7 H15.2 V14.6 H3.2 L1 13.2 V3.4 Q1 2 2.2 1.9 M3.2 14.6 V3.6 Q3.2 2.6 4.4 2.6 H15" fill="#fff" stroke="#3c3c3c" stroke-width="0.8" stroke-linejoin="round"/><rect x="6.9" y="6.3" width="8.3" height="8.3" fill="#9b9b9b" stroke="#3c3c3c" stroke-width="0.8"/><path d="M5.4 13 V4.8 H13.6" fill="none" stroke="#3c3c3c" stroke-width="0.8"/></svg><span class="tx" style="left:45px"><span style="letter-spacing:0.021px">bottom extrude</span></span></div>
<div class="row" style="top:220.5px"><svg style="left:24px;top:5px" width="16" height="16" viewBox="0 0 16 16"><path d="M1.2 0.8 L15 2.8 V15 L1.2 12.6 Z" fill="#dcdcdc" stroke="#3c3c3c" stroke-width="0.8" stroke-linejoin="round"/><path d="M8.3 1.9 V8.4 L15 9.4" fill="none" stroke="#3c3c3c" stroke-width="0.8"/></svg><span class="tx" style="left:45px"><span style="letter-spacing:0.107px">bottom wall plane</span></span></div>
<div class="row sel" style="top:246.5px"><svg style="left:24px;top:5px" width="16" height="16" viewBox="0 0 16 16"><path d="M2.2 12.6 L3.6 9.2 L12.2 1 L14.6 3.4 L5.8 11.6 Z M3.6 9.2 L5.8 11.6 M10.9 2.3 L13.3 4.7" fill="#fff" stroke="#8a8a8a" stroke-width="0.8" stroke-linejoin="round"/><path d="M0.3 14.6 H15.6" stroke="#7fa6e0" stroke-width="1"/></svg><span class="tx" style="left:45px"><span style="letter-spacing:-0.001px">bottom sketch</span></span></div>
<div class="row sup" style="top:272.5px"><svg style="left:24px;top:5px" width="16" height="16" viewBox="0 0 16 16"><path d="M2.2 1.9 Q2.2 0.7 3.6 0.7 H15.2 V14.6 H3.2 L1 13.2 V3.4 Q1 2 2.2 1.9 M3.2 14.6 V3.6 Q3.2 2.6 4.4 2.6 H15" fill="#fff" stroke="#a8a8a8" stroke-width="0.8" stroke-linejoin="round"/><rect x="6.9" y="6.3" width="8.3" height="8.3" fill="#c6c6c6" stroke="#a8a8a8" stroke-width="0.8"/><path d="M5.4 13 V4.8 H13.6" fill="none" stroke="#a8a8a8" stroke-width="0.8"/></svg><span class="tx" style="left:45px"><span style="letter-spacing:0.030px">bottom holes</span></span></div>
<div class="row" style="top:298.5px"><svg style="left:4px;top:10px" width="13" height="8" viewBox="0 0 13 8"><path d="M1 1.2 L6.5 6.4 L12 1.2" fill="none" stroke="#3a3a3a" stroke-width="1.9"/></svg><span class="tx" style="left:23px"><span style="letter-spacing:0.123px">left wall (4)</span></span></div>
<div class="row sup" style="top:324.5px"><svg style="left:24px;top:5px" width="16" height="16" viewBox="0 0 16 16"><path d="M2.2 1.9 Q2.2 0.7 3.6 0.7 H15.2 V14.6 H3.2 L1 13.2 V3.4 Q1 2 2.2 1.9 M3.2 14.6 V3.6 Q3.2 2.6 4.4 2.6 H15" fill="#fff" stroke="#a8a8a8" stroke-width="0.8" stroke-linejoin="round"/><rect x="6.9" y="6.3" width="8.3" height="8.3" fill="#c6c6c6" stroke="#a8a8a8" stroke-width="0.8"/><path d="M5.4 13 V4.8 H13.6" fill="none" stroke="#a8a8a8" stroke-width="0.8"/></svg><span class="tx" style="left:45px"><span style="letter-spacing:0.159px">left wall extrude</span></span></div>
<div class="row sup" style="top:350.5px"><svg style="left:24px;top:5px" width="16" height="16" viewBox="0 0 16 16"><path d="M1.2 0.8 L15 2.8 V15 L1.2 12.6 Z" fill="#e9e9e9" stroke="#a8a8a8" stroke-width="0.8" stroke-linejoin="round"/><path d="M8.3 1.9 V8.4 L15 9.4" fill="none" stroke="#a8a8a8" stroke-width="0.8"/></svg><span class="tx" style="left:45px"><span style="letter-spacing:0.175px">left wall plane</span></span></div>
<div class="row sup" style="top:376.5px"><svg style="left:24px;top:5px" width="16" height="16" viewBox="0 0 16 16"><path d="M2.2 12.6 L3.6 9.2 L12.2 1 L14.6 3.4 L5.8 11.6 Z M3.6 9.2 L5.8 11.6 M10.9 2.3 L13.3 4.7" fill="#fff" stroke="#9a9a9a" stroke-width="0.8" stroke-linejoin="round"/><path d="M0.3 14.6 H15.6" stroke="#7fa6e0" stroke-width="1"/></svg><span class="tx" style="left:45px"><span style="letter-spacing:0.171px">left wall sketch</span></span></div>
<div class="row sup" style="top:402.5px"><svg style="left:24px;top:5px" width="16" height="16" viewBox="0 0 16 16"><path d="M2.2 1.9 Q2.2 0.7 3.6 0.7 H15.2 V14.6 H3.2 L1 13.2 V3.4 Q1 2 2.2 1.9 M3.2 14.6 V3.6 Q3.2 2.6 4.4 2.6 H15" fill="#fff" stroke="#a8a8a8" stroke-width="0.8" stroke-linejoin="round"/><rect x="6.9" y="6.3" width="8.3" height="8.3" fill="#c6c6c6" stroke="#a8a8a8" stroke-width="0.8"/><path d="M5.4 13 V4.8 H13.6" fill="none" stroke="#a8a8a8" stroke-width="0.8"/></svg><span class="tx" style="left:45px"><span style="letter-spacing:0.171px">left wall holes</span></span></div>
<div class="row" style="top:428.5px"><svg style="left:4px;top:10px" width="13" height="8" viewBox="0 0 13 8"><path d="M1 1.2 L6.5 6.4 L12 1.2" fill="none" stroke="#3a3a3a" stroke-width="1.9"/></svg><span class="tx" style="left:23px"><span style="letter-spacing:0.098px">right wall (4)</span></span></div>
<div class="row sup" style="top:454.5px"><svg style="left:24px;top:5px" width="16" height="16" viewBox="0 0 16 16"><path d="M2.2 1.9 Q2.2 0.7 3.6 0.7 H15.2 V14.6 H3.2 L1 13.2 V3.4 Q1 2 2.2 1.9 M3.2 14.6 V3.6 Q3.2 2.6 4.4 2.6 H15" fill="#fff" stroke="#a8a8a8" stroke-width="0.8" stroke-linejoin="round"/><rect x="6.9" y="6.3" width="8.3" height="8.3" fill="#c6c6c6" stroke="#a8a8a8" stroke-width="0.8"/><path d="M5.4 13 V4.8 H13.6" fill="none" stroke="#a8a8a8" stroke-width="0.8"/></svg><span class="tx" style="left:45px"><span style="letter-spacing:0.091px">right extrude</span></span></div>
<div class="row sup" style="top:480.5px"><svg style="left:24px;top:5px" width="16" height="16" viewBox="0 0 16 16"><path d="M1.2 0.8 L15 2.8 V15 L1.2 12.6 Z" fill="#e9e9e9" stroke="#a8a8a8" stroke-width="0.8" stroke-linejoin="round"/><path d="M8.3 1.9 V8.4 L15 9.4" fill="none" stroke="#a8a8a8" stroke-width="0.8"/></svg><span class="tx" style="left:45px"><span style="letter-spacing:0.137px">right wall plane</span></span></div>
<div class="row sup" style="top:506.5px"><svg style="left:24px;top:5px" width="16" height="16" viewBox="0 0 16 16"><path d="M2.2 12.6 L3.6 9.2 L12.2 1 L14.6 3.4 L5.8 11.6 Z M3.6 9.2 L5.8 11.6 M10.9 2.3 L13.3 4.7" fill="#fff" stroke="#9a9a9a" stroke-width="0.8" stroke-linejoin="round"/><path d="M0.3 14.6 H15.6" stroke="#7fa6e0" stroke-width="1"/></svg><span class="tx" style="left:45px"><span style="letter-spacing:0.165px">right wall sketch</span></span></div>
<div class="row sup" style="top:532.5px"><svg style="left:24px;top:5px" width="16" height="16" viewBox="0 0 16 16"><path d="M2.2 1.9 Q2.2 0.7 3.6 0.7 H15.2 V14.6 H3.2 L1 13.2 V3.4 Q1 2 2.2 1.9 M3.2 14.6 V3.6 Q3.2 2.6 4.4 2.6 H15" fill="#fff" stroke="#a8a8a8" stroke-width="0.8" stroke-linejoin="round"/><rect x="6.9" y="6.3" width="8.3" height="8.3" fill="#c6c6c6" stroke="#a8a8a8" stroke-width="0.8"/><path d="M5.4 13 V4.8 H13.6" fill="none" stroke="#a8a8a8" stroke-width="0.8"/></svg><span class="tx" style="left:45px"><span style="letter-spacing:0.040px">right holes</span></span></div>
<div class="row sup" style="top:558.5px"><svg style="left:5px;top:5px" width="17" height="16" viewBox="0 0 17 16"><path d="M1 6.5 Q1 1 7 1 H15.6 V14.8 H3 L1 13.4 Z" fill="#fff" stroke="#8a8a8a" stroke-width="0.8" stroke-linejoin="round"/><path d="M1 6.5 Q1 1 7 1 H9 Q3 1.4 3 7.6 L3 14.8 L1 13.4Z" fill="#c9c9c9" stroke="#8a8a8a" stroke-width="0.8" stroke-linejoin="round"/></svg><span class="tx" style="left:27px"><span style="letter-spacing:0.004px">Fillet 1</span></span></div>
<div class="row sup" style="top:584.5px"><svg style="left:4.5px;top:4px" width="18" height="18" viewBox="0 0 18 18"><path d="M0.6 0.8 H15.4 L17.4 2.4 V17.2 H2.6 L0.6 15.6 Z M2.6 17.2 V2.4 H17.4 M0.6 0.8 L2.6 2.4" fill="#fff" stroke="#8a8a8a" stroke-width="0.8" stroke-linejoin="round"/><circle cx="10.4" cy="10.4" r="4.6" fill="#c4c4c4" stroke="#8a8a8a" stroke-width="0.8"/><path d="M10.6 5.8 L10 10.6 L13.4 7.4" fill="none" stroke="#8a8a8a" stroke-width="0.8"/></svg><span class="tx" style="left:27px"><span style="letter-spacing:-0.210px">3D Printed Hole 1</span></span><svg style="left:136.4px;top:4.3px" width="17" height="17" viewBox="0 0 17 17"><circle cx="8.5" cy="8.5" r="8" fill="#6b99d0"/><circle cx="8.5" cy="8.5" r="2.9" fill="#fff"/><path d="M8.5 1.6 V3.6 M8.5 13.4 V15.4" stroke="#fff" stroke-width="1.5"/></svg></div>
<div class="row" style="top:610.5px"><svg style="left:4px;top:10px" width="13" height="8" viewBox="0 0 13 8"><path d="M1 1.2 L6.5 6.4 L12 1.2" fill="none" stroke="#3a3a3a" stroke-width="1.9"/></svg><span class="tx" style="left:23px"><span style="letter-spacing:-0.090px">logofix (4)</span></span></div>
<div class="row sup" style="top:636.5px"><svg style="left:24px;top:5px" width="16" height="16" viewBox="0 0 16 16"><path d="M2.2 12.6 L3.6 9.2 L12.2 1 L14.6 3.4 L5.8 11.6 Z M3.6 9.2 L5.8 11.6 M10.9 2.3 L13.3 4.7" fill="#fff" stroke="#9a9a9a" stroke-width="0.8" stroke-linejoin="round"/><path d="M0.3 14.6 H15.6" stroke="#7fa6e0" stroke-width="1"/></svg><span class="tx" style="left:45px"><span style="letter-spacing:-0.306px">Sketch 1</span></span></div>
<div class="vline" style="left:8.8px;top:65.5px;height:103px"></div><div class="vtick" style="left:4.5px;top:168.5px"></div>
<div class="vline" style="left:8.8px;top:195.5px;height:103px"></div><div class="vtick" style="left:4.5px;top:298.5px"></div>
<div class="vline" style="left:8.8px;top:325.5px;height:103px"></div><div class="vtick" style="left:4.5px;top:428.5px"></div>
<div class="vline" style="left:8.8px;top:455.5px;height:103px"></div><div class="vtick" style="left:4.5px;top:558.5px"></div>
<div class="vline" style="left:8.8px;top:637.5px;height:48px"></div><div class="vtick" style="left:4.5px;top:685.5px"></div>
</div>
<div id="sbar"><div id="sthumb"></div>
<svg class="ic" style="left:3px;top:8.5px" width="9" height="6"><path d="M0 5.5 L4.5 0.5 L9 5.5Z" fill="#3a3a3a"/></svg>
<svg class="ic" style="left:3px;top:651px" width="9" height="6"><path d="M0 0.5 L4.5 5.5 L9 0.5Z" fill="#3a3a3a"/></svg>
</div>
<div id="parts"><svg class="ic" style="left:4px;top:9.5px" width="13" height="8" viewBox="0 0 13 8"><path d="M1 1.2 L6.5 6.4 L12 1.2" fill="none" stroke="#3a3a3a" stroke-width="1.9"/></svg><span style="position:absolute;left:23px;top:4px;font-size:13.3px;line-height:16px;color:#2b2b2b;white-space:pre">Parts (1)</span>
</div>
</div>
<div id="flyout"><svg class="ic" style="left:0;top:0" width="33" height="34" viewBox="249 612 33 34"><path d="M264.2 622.5 H274 M261.2 627.5 H274 M261.2 632.5 H274 M261.2 637.5 H274" stroke="#2e2e2e" stroke-width="1"/><path d="M258.9 626.2 V638.6" stroke="#8a8a8a" stroke-width="2"/><path d="M256 621.4 L258.9 624.2 L261.9 621.4" fill="none" stroke="#2e2e2e" stroke-width="1.1"/></svg>
</div>
<div id="dlg">
<div class="hd"><span>bottom sketch</span><div id="ok"><svg width="28" height="28"><path d="M7 14.5 L12 19.5 L21.5 8.5" stroke="#fff" stroke-width="3.2" fill="none"/></svg></div>
<svg class="ic" style="left:198px;top:6px" width="16" height="16"><path d="M2.5 2.5 L13 13.5 M13 2.5 L2.5 13.5" stroke="#c8222c" stroke-width="3" fill="none"/></svg></div>
<div id="fld"><span class="l">Sketch plane</span><span class="v">bottom wall plane</span>
<svg class="ic" style="left:166px;top:25px" width="9" height="9"><path d="M0.7 0.7 L8.3 8.3 M8.3 0.7 L0.7 8.3" stroke="#b5b5b5" stroke-width="1" fill="none"/></svg></div>
<svg class="ic" style="left:194.3px;top:36.7px" width="20" height="20"><circle cx="10" cy="10" r="8.3" fill="none" stroke="#3a3a3a" stroke-width="1"/><circle cx="10" cy="10" r="6.6" fill="none" stroke="#3a3a3a" stroke-width="1"/><path d="M10 3.5 V10.8 H16.5" stroke="#3a3a3a" stroke-width="1.3" fill="none"/></svg>
<div class="cb off" style="top:91.5px"></div><span class="cbl" style="top:90px">Disable imprinting</span>
<div class="cb on" style="top:118.5px"><svg width="12" height="12"><path d="M2.4 6 L5 8.6 L9.6 3.2" stroke="#fff" stroke-width="1.8" fill="none"/></svg></div><span class="cbl" style="top:117px">Show constraints</span>
<div class="cb on" style="top:146px"><svg width="12" height="12"><path d="M2.4 6 L5 8.6 L9.6 3.2" stroke="#fff" stroke-width="1.8" fill="none"/></svg></div><span class="cbl" style="top:144.5px">Show overdefined</span>
<div id="final">Final</div>
<svg class="ic" style="left:202px;top:174px" width="14" height="14"><circle cx="7" cy="7" r="6.3" fill="#b3b3b3"/><text x="7" y="10.6" font-family="'Liberation Sans',sans-serif" font-size="10" font-weight="bold" fill="#fff" text-anchor="middle">?</text></svg>
</div>

</body></html>
